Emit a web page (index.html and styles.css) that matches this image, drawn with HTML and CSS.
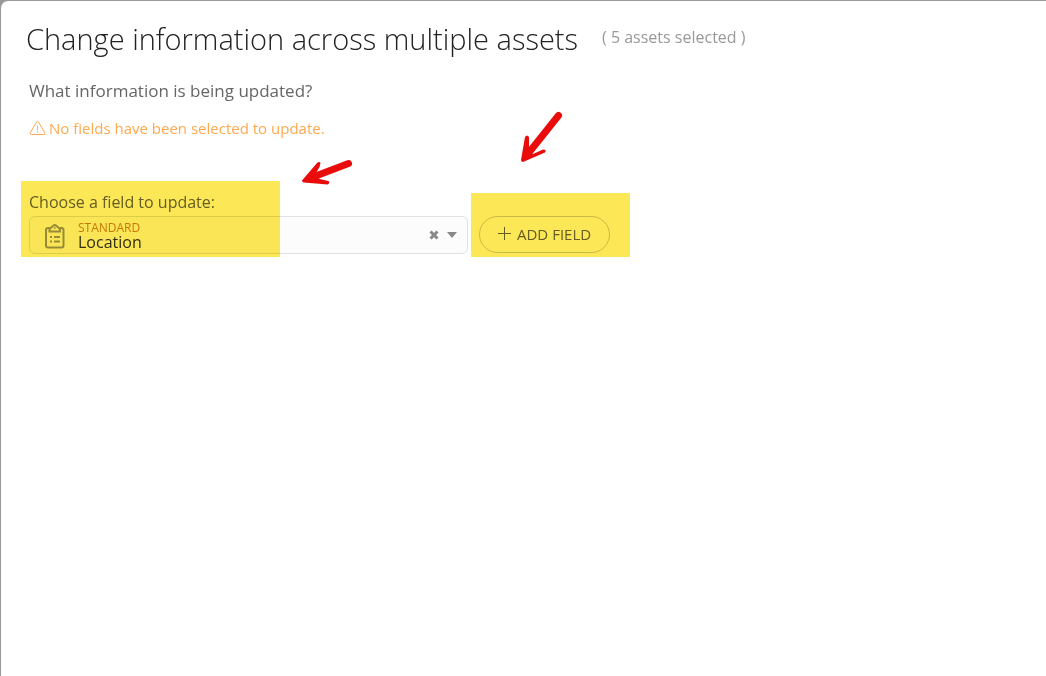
FILE: index.html
```html
<!DOCTYPE html>
<html lang="en">
<head>
  <meta charset="UTF-8">
  <meta name="viewport" content="width=device-width, initial-scale=1.0">
  <title>Change information across multiple assets</title>
  <link rel="stylesheet" href="styles.css">
</head>
<body>
  <main class="modal">
    <header class="modal-header">
      <h1>Change information across multiple assets</h1>
      <span class="selected-count">( 5 assets selected )</span>
    </header>

    <p class="question">What information is being updated?</p>
    <p class="warning">
      <svg class="warning-icon" viewBox="0 0 17 16" aria-hidden="true">
        <path d="M7.6 1.9 1.2 12.8q-.7 1.7 1 1.7h12.6q1.7 0 1-1.7L9.4 1.9q-.9-1.3-1.8 0z"/>
        <path d="M8.5 5.5v4.5M8.5 11.2v1.4"/>
      </svg>
      No fields have been selected to update.
    </p>

    <form class="field-form">
      <div class="field-group">
        <label for="field">Choose a field to update:</label>
        <div class="picker">
          <svg class="clipboard-icon" viewBox="0 0 20 26" aria-hidden="true">
            <path d="M4.500 5H3Q1 5 1 7v15.500q0 2 2 2h13.500q2 0 2-2V7q0-2-2-2H15"/>
            <path d="M4.500 8.500V6.500Q4.500 5.300 6 4.700L8.300 2.700Q9.800 1.300 11.300 2.700L13.500 4.700q1.500.6 1.500 1.800v2z"/>
            <path d="M9.200 5h1.200M5 14h2M9 14h6M5 18.500h2M9 18.500h6"/>
          </svg>
          <div class="picker-value">
            <span class="picker-type">STANDARD</span>
            <select id="field">
              <option>Location</option>
            </select>
          </div>
          <button type="button" class="clear" aria-label="Clear">
            <svg viewBox="0 0 10 10"><path d="M1.500 1.500l7 7M8.500 1.500l-7 7"/></svg>
          </button>
          <svg class="caret" viewBox="0 0 10 6" aria-hidden="true"><path d="M0 0h10L5 6z"/></svg>
        </div>
        <div class="highlight highlight-field"></div>
      </div>
      <div class="add-group">
        <button type="button" class="add-field">
          <svg class="plus" viewBox="0 0 13 13" aria-hidden="true"><path d="M6.500 0v13M0 6.500h13"/></svg>
          ADD FIELD
        </button>
        <div class="highlight highlight-add"></div>
      </div>
    </form>

    <svg class="arrow arrow-field" viewBox="0 0 52 28" aria-hidden="true">
      <path class="shaft" d="M47.500 4.500 12 18"/>
      <path d="M1 21.500 16 4q2-2 3.500 0l-1 4-4 7 4 5 9 2q2 2-1 3.500L3 23.500q-2 0-2-2z"/>
    </svg>
    <svg class="arrow arrow-add" viewBox="0 0 44 52" aria-hidden="true">
      <path class="shaft" d="M38.500 4.500 11 39"/>
      <path d="M1 49 5 26q2-3 4 0v12l4 5 10-4.500q4 0 2 3L3 51q-2 0-2-2z"/>
    </svg>
  </main>
</body>
</html>
```

FILE: styles.css
```css
* {
  box-sizing: border-box;
}
body {
  margin: 0;
  background-color: #999;
  font-family: "Open Sans", sans-serif;
  font-size: 16px;
  color: #666;
}
.modal {
  position: relative;
  min-height: calc(100vh - 1px);
  margin-left: 1px;
  padding: 16px 25px;
  background-color: #fff;
  border-top-left-radius: 7px;
}
body {
  padding-top: 1px;
}
.modal-header {
  display: flex;
  align-items: flex-start;
  gap: 24px;
}
h1 {
  margin: 0;
  font-size: 29px;
  font-weight: 300;
  line-height: 44px;
  color: #222;
}
.selected-count {
  line-height: 40px;
  color: #999;
}
.question,
.warning {
  margin: 0 3px;
  line-height: 24px;
}
.question {
  margin-top: 18px;
  font-size: 17px;
}
.warning {
  display: flex;
  align-items: center;
  gap: 3px;
  margin-top: 13px;
  font-size: 15px;
  color: #ffa94f;
}
.warning-icon {
  width: 17px;
  height: 16px;
  fill: none;
  stroke: currentColor;
}
.field-form {
  display: flex;
  align-items: flex-end;
  gap: 11px;
  margin: 50px 3px 0;
}
.field-group {
  position: relative;
  width: 439px;
}
.field-group label {
  display: block;
  line-height: 24px;
}
.picker {
  display: flex;
  align-items: center;
  height: 38px;
  margin-top: 2px;
  padding: 0 10px 0 15px;
  background-color: #fcfcfc;
  border: 1px solid #dfe1e2;
  border-radius: 6px;
}
.clipboard-icon {
  width: 20px;
  height: 26px;
  margin-top: 2px;
  fill: none;
  stroke: #999;
  stroke-width: 2;
}
.picker-value {
  display: flex;
  flex: 1;
  flex-direction: column;
  margin-left: 13px;
}
.picker-type {
  padding-top: 2px;
  font-size: 12px;
  line-height: 12px;
  color: #cb8410;
}
select {
  appearance: none;
  height: 16px;
  padding: 0;
  border: 0;
  background: none;
  font: inherit;
  line-height: 16px;
  color: #333;
}
.clear {
  display: flex;
  padding: 0;
  border: 0;
  background: none;
}
.clear svg {
  width: 10px;
  height: 10px;
  stroke: #888;
  stroke-width: 3;
}
.caret {
  width: 10px;
  height: 6px;
  margin-left: 8px;
  fill: #888;
}
.add-group {
  position: relative;
  padding-bottom: 1px;
}
.add-field {
  display: flex;
  align-items: center;
  gap: 6px;
  height: 37px;
  padding: 0 18px 2px;
  border: 1px solid #ccc;
  border-radius: 19px;
  background: none;
  font: inherit;
  font-size: 15px;
  color: #666;
}
.plus {
  width: 13px;
  height: 13px;
  stroke: currentColor;
}
/* marker strokes over the controls */
.highlight {
  position: absolute;
  background-color: #fce856;
  mix-blend-mode: multiply;
  pointer-events: none;
}
.highlight-field {
  top: -9px;
  left: -8px;
  width: 259px;
  height: 76px;
}
.highlight-add {
  top: -23px;
  right: -20px;
  bottom: -3px;
  left: -8px;
}
.arrow {
  position: absolute;
  fill: #ea0b0b;
}
.arrow .shaft {
  fill: none;
  stroke: #ea0b0b;
  stroke-width: 7;
  stroke-linecap: round;
}
.arrow-field {
  top: 158px;
  left: 300px;
  width: 52px;
  height: 28px;
}
.arrow-add {
  top: 110px;
  left: 519px;
  width: 44px;
  height: 52px;
}
```
